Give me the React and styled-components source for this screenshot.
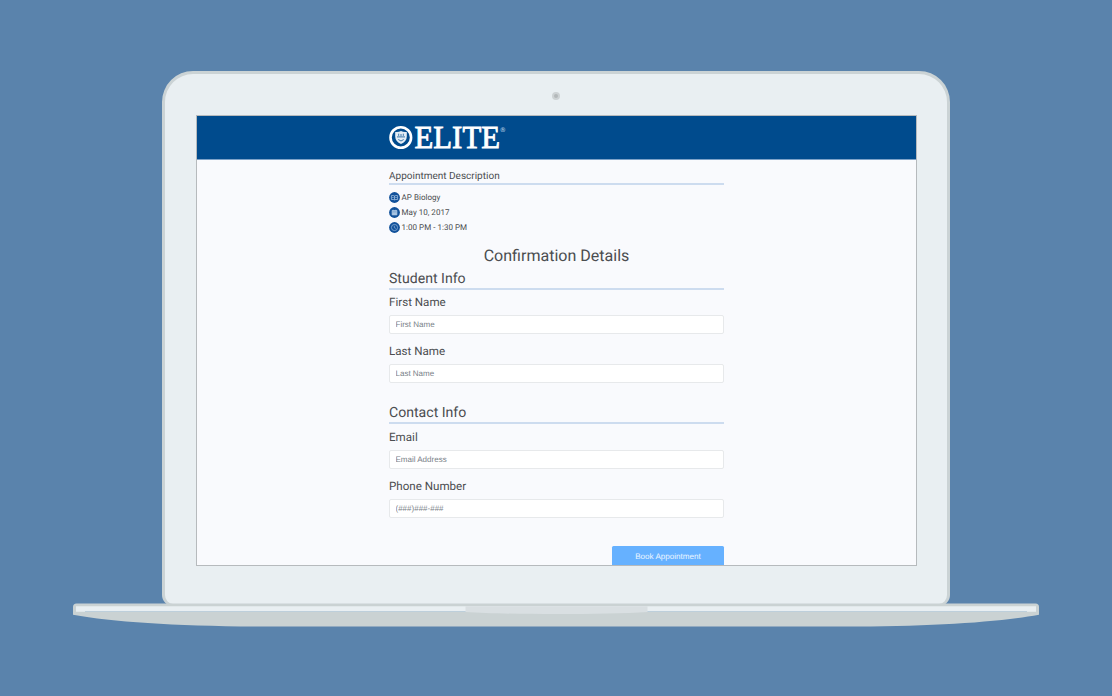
import React from "react";
import styled, { createGlobalStyle } from "styled-components";

const GlobalStyle = createGlobalStyle`
  * { box-sizing: border-box; }
  body { margin: 0; background: #5a83ac; font-family: Roboto, sans-serif; color: #4b4d50; text-rendering: geometricPrecision; }
`;

const Stage = styled.main`
  width: 100%;
  height: 696px;
  padding-top: 70.5px;
  display: flex;
  flex-direction: column;
  align-items: center;
  overflow: hidden;
  background: #5a83ac;
`;

const Lid = styled.div`
  width: 788px;
  height: 535.5px;
  flex: none;
  display: flex;
  flex-direction: column;
  align-items: center;
  border: 3px solid #cbd3d5;
  border-bottom-width: 2px;
  border-radius: 31px 31px 11px 11px;
  background: #e9eff2;
`;

const Camera = styled.div`
  width: 8px;
  height: 8px;
  margin: 18px 0 15.5px;
  flex: none;
  border: 2px solid #cdd2d4;
  border-radius: 50%;
  background: #b3b8ba;
`;

const Screen = styled.div`
  width: 721px;
  height: 451px;
  margin-left: 1px;
  flex: none;
  overflow: hidden;
  border: 1px solid #b6babd;
  background: #f9fafd;
`;

const Header = styled.header`
  height: 43.5px;
  padding-left: 192px;
  display: flex;
  align-items: center;
  background: #004b8d;
  border-bottom: 1px solid #7da2c8;
`;

const Base = styled.svg`
  display: block;
  flex: none;
  width: 966px;
  height: 24px;
  margin-top: -3px;
`;

const Content = styled.div`
  width: 335px;
  margin-left: 192px;
  display: flex;
  flex-direction: column;
`;

const Heading = styled.h2`
  margin: ${(p) => p.$top || 0}px 0 0;
  height: ${(p) => p.$height}px;
  padding-top: ${(p) => p.$inset || 1}px;
  border-bottom: 2px solid #cddcef;
  font-weight: 400;
  font-size: ${(p) => p.$size}px;
  line-height: ${(p) => p.$height - 2}px;
`;

const Details = styled.ul`
  list-style: none;
  margin: 5px 0 0;
  padding: 0;
`;

const Detail = styled.li`
  height: 15px;
  display: flex;
  align-items: center;
  gap: 1.6px;
  font-size: 8.05px;
  line-height: 15px;
`;

const Title = styled.h1`
  margin: 10.5px 0 1.5px;
  text-align: center;
  font-size: 16.05px;
  font-weight: 400;
  line-height: 22px;
`;

const Field = styled.label`
  display: flex;
  flex-direction: column;
  gap: 6px;
  margin-top: ${(p) => p.$top}px;
  font-size: 11.6px;
  line-height: 14px;
`;

const Input = styled.input`
  width: 100%;
  height: 19px;
  padding: 0 5.5px;
  border: 1px solid #e7e9eb;
  border-radius: 2px;
  outline: none;
  background: #fff;
  font: 8px "Liberation Sans", Arial, sans-serif;
  text-rendering: inherit;
  &::placeholder { color: #788087; opacity: 1; }
`;

const BookButton = styled.button`
  align-self: flex-end;
  width: 112px;
  height: 22px;
  margin-top: 28px;
  padding: 0;
  border: 0;
  border-radius: 1.5px;
  background: #66b1ff;
  color: #edf6ff;
  font: 8.1px/22px "Liberation Sans", Arial, sans-serif;
  text-rendering: inherit;
`;

function Logo() {
  return (
    <svg width="126" height="42" viewBox="0 -6 126 42">
      <circle cx="11.800" cy="15.500" r="10.300" fill="none" stroke="#fff" strokeWidth="2.600" />
      <path d="M6.200 9.900C8.300 10.300 10.200 9.900 12 9c1.800.9 3.700 1.300 5.800.9v4.700c0 3.600-2.300 5.900-5.800 7.500-3.500-1.600-5.800-3.900-5.800-7.500z" fill="#e3edf5" />
      <path d="M8 14.900h8M9.700 11.700v2.200M12 12v2.200M14.300 11.700v2.200M9.300 17.500l2.700 1.500 2.700-1.500" fill="none" stroke="#286aa2" strokeWidth=".9" />
      <text x="25.500" y="26" textLength="85.500" lengthAdjust="spacingAndGlyphs" fill="#fff" stroke="#fff" strokeWidth=".85" fontFamily="'Liberation Serif', serif" fontSize="32">ELITE</text>
      <text x="111.300" y="9.500" fill="#b8cfe2" fontFamily="Roboto, sans-serif" fontSize="6.500">®</text>
    </svg>
  );
}

function Icon({ kind }) {
  return (
    <svg width="11" height="11" viewBox="0 0 11 11" fill="none" stroke="#a9c5e3" strokeWidth=".75">
      <circle cx="5.500" cy="5.500" r="5.400" fill="#11519a" stroke="none" />
      {kind === "book" && <path d="M2.400 3.600c1.200-.2 2.300-.1 3.100.4.800-.5 1.900-.6 3.100-.4v3.900c-1.200-.2-2.300-.1-3.100.4-.8-.5-1.900-.6-3.100-.4zM5.500 4v3.900M3.300 5.500h1.300M6.400 5.500h1.300" />}
      {kind === "calendar" && <path d="M3.100 3.500h4.800v4.400H3.100zM4.200 2.700v1M6.800 2.700v1" fill="#a9c5e3" />}
      {kind === "calendar" && <path d="M3.600 4.900h3.800" stroke="#5d8fc2" strokeWidth=".6" />}
      {kind === "clock" && <path d="M8.600 5.500a3.100 3.100 0 1 1-6.200 0 3.100 3.100 0 0 1 6.200 0M5.300 3.700v2l1.500.7" strokeWidth=".65" />}
    </svg>
  );
}

function LabeledInput({ label, hint, top }) {
  return (
    <Field $top={top}>
      {label}
      <Input placeholder={hint} />
    </Field>
  );
}

export default function App() {
  return (
    <>
      <GlobalStyle />
      <Stage>
        <Lid>
          <Camera />
          <Screen>
            <Header><Logo /></Header>
            <Content>
              <Heading $top={7} $height={18} $size={10} $inset={2}>Appointment Description</Heading>
              <Details>
                <Detail><Icon kind="book" />AP Biology</Detail>
                <Detail><Icon kind="calendar" />May 10, 2017</Detail>
                <Detail><Icon kind="clock" />1:00 PM - 1:30 PM</Detail>
              </Details>
              <Title>Confirmation Details</Title>
              <Heading $top={-1} $height={22} $size={14.1}>Student Info</Heading>
              <LabeledInput label="First Name" hint="First Name" top={5.5} />
              <LabeledInput label="Last Name" hint="Last Name" top={10} />
              <Heading $top={18.5} $height={22.5} $size={14.1}>Contact Info</Heading>
              <LabeledInput label="Email" hint="Email Address" top={6} />
              <LabeledInput label="Phone Number" hint="(###)###-###" top={10} />
              <BookButton>Book Appointment</BookButton>
            </Content>
          </Screen>
        </Lid>
        <Base viewBox="0 0 966 24">
          <path d="M0 4Q0 .5 3.500 .5H962.500Q966 .5 966 4V11.700C925 19 860 23.500 770 23.500H196C106 23.500 41 19 0 11.700z" fill="#cad2d3" />
          <path d="M3 3.300H963V8.700H3z" fill="#e9eff2" />
          <path d="M12 8.500H954" stroke="#bdcfdb" strokeWidth="1" />
          <path d="M392.500 3.300H574.500V9C530 11.800 437 11.800 392.500 9z" fill="#d9dfe2" />
        </Base>
      </Stage>
    </>
  );
}
